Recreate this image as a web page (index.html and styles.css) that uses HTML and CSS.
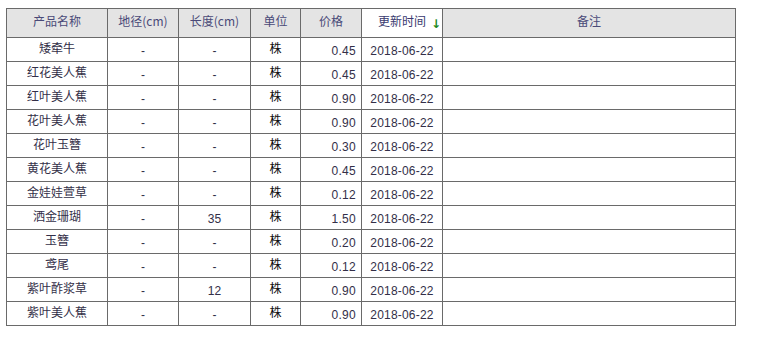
FILE: index.html
```html
<!DOCTYPE html>
<html>
<head>
<meta charset="utf-8">
<link rel="stylesheet" href="styles.css">
</head>
<body>
<table class="grid">
  <colgroup>
    <col class="c-name"><col class="c-dia"><col class="c-len"><col class="c-unit"><col class="c-price"><col class="c-date"><col class="c-note">
  </colgroup>
  <thead>
    <tr>
      <th>产品名称</th><th>地径(cm)</th><th>长度(cm)</th><th>单位</th><th>价格</th><th class="sorted">更新时间<span class="arrow">↓</span></th><th>备注</th>
    </tr>
  </thead>
  <tbody>
    <tr><td class="name">矮牵牛</td><td>-</td><td>-</td><td class="unit">株</td><td class="num">0.45</td><td class="date">2018-06-22</td><td></td></tr>
    <tr><td class="name">红花美人蕉</td><td>-</td><td>-</td><td class="unit">株</td><td class="num">0.45</td><td class="date">2018-06-22</td><td></td></tr>
    <tr><td class="name">红叶美人蕉</td><td>-</td><td>-</td><td class="unit">株</td><td class="num">0.90</td><td class="date">2018-06-22</td><td></td></tr>
    <tr><td class="name">花叶美人蕉</td><td>-</td><td>-</td><td class="unit">株</td><td class="num">0.90</td><td class="date">2018-06-22</td><td></td></tr>
    <tr><td class="name">花叶玉簪</td><td>-</td><td>-</td><td class="unit">株</td><td class="num">0.30</td><td class="date">2018-06-22</td><td></td></tr>
    <tr><td class="name">黄花美人蕉</td><td>-</td><td>-</td><td class="unit">株</td><td class="num">0.45</td><td class="date">2018-06-22</td><td></td></tr>
    <tr><td class="name">金娃娃萱草</td><td>-</td><td>-</td><td class="unit">株</td><td class="num">0.12</td><td class="date">2018-06-22</td><td></td></tr>
    <tr><td class="name">洒金珊瑚</td><td>-</td><td>35</td><td class="unit">株</td><td class="num">1.50</td><td class="date">2018-06-22</td><td></td></tr>
    <tr><td class="name">玉簪</td><td>-</td><td>-</td><td class="unit">株</td><td class="num">0.20</td><td class="date">2018-06-22</td><td></td></tr>
    <tr><td class="name">鸢尾</td><td>-</td><td>-</td><td class="unit">株</td><td class="num">0.12</td><td class="date">2018-06-22</td><td></td></tr>
    <tr><td class="name">紫叶酢浆草</td><td>-</td><td>12</td><td class="unit">株</td><td class="num">0.90</td><td class="date">2018-06-22</td><td></td></tr>
    <tr><td class="name">紫叶美人蕉</td><td>-</td><td>-</td><td class="unit">株</td><td class="num">0.90</td><td class="date">2018-06-22</td><td></td></tr>
  </tbody>
</table>
</body>
</html>
```

FILE: styles.css
```css
html, body {
  margin: 0;
  padding: 0;
  background: #fff;
}
body {
  padding: 8px 0 0 6px;
  font-family: "Liberation Sans", "Noto Sans CJK SC", sans-serif;
  font-size: 12px;
  color: #332f48;
}
.grid {
  border-collapse: collapse;
  table-layout: fixed;
  width: 729px;
}
.c-name { width: 101px; }
.c-dia { width: 71px; }
.c-len { width: 72px; }
.c-unit { width: 50px; }
.c-price { width: 61px; }
.c-date { width: 81px; }
.c-note { width: 293px; }
.grid th,
.grid td {
  border: 1px solid #6a6a6a;
  padding: 0 5px;
  text-align: center;
  white-space: nowrap;
  overflow: hidden;
  vertical-align: top;
}
.grid th {
  height: 14px;
  background: #e4e4e4;
  font-weight: normal;
  color: #4a4a78;
  font-family: "Noto Sans CJK SC", "Liberation Sans", sans-serif;
  font-size: 12px;
  line-height: 14px;
  padding-top: 5px;
  padding-bottom: 9px;
}
.grid th.sorted {
  background: #fff;
  position: relative;
  color: #3a3a70;
}
.arrow {
  position: absolute;
  right: 1px;
  top: 9px;
  color: #1e8a1e;
  font-weight: bold;
  font-size: 12px;
  line-height: 12px;
  font-family: "DejaVu Sans", sans-serif;
}
.grid td {
  height: 14px;
  line-height: 14px;
  padding-top: 6px;
  padding-bottom: 3px;
}
.grid td.name,
.grid td.unit {
  font-family: "Noto Sans CJK SC", "Liberation Sans", sans-serif;
  padding-top: 3px;
  padding-bottom: 6px;
}
.grid td.unit {
  color: #111;
}
.grid td.num {
  text-align: right;
  padding-right: 5px;
  letter-spacing: 0.3px;
}
.grid td.date {
  letter-spacing: 0.2px;
  padding-left: 0;
  padding-right: 0;
}
```
